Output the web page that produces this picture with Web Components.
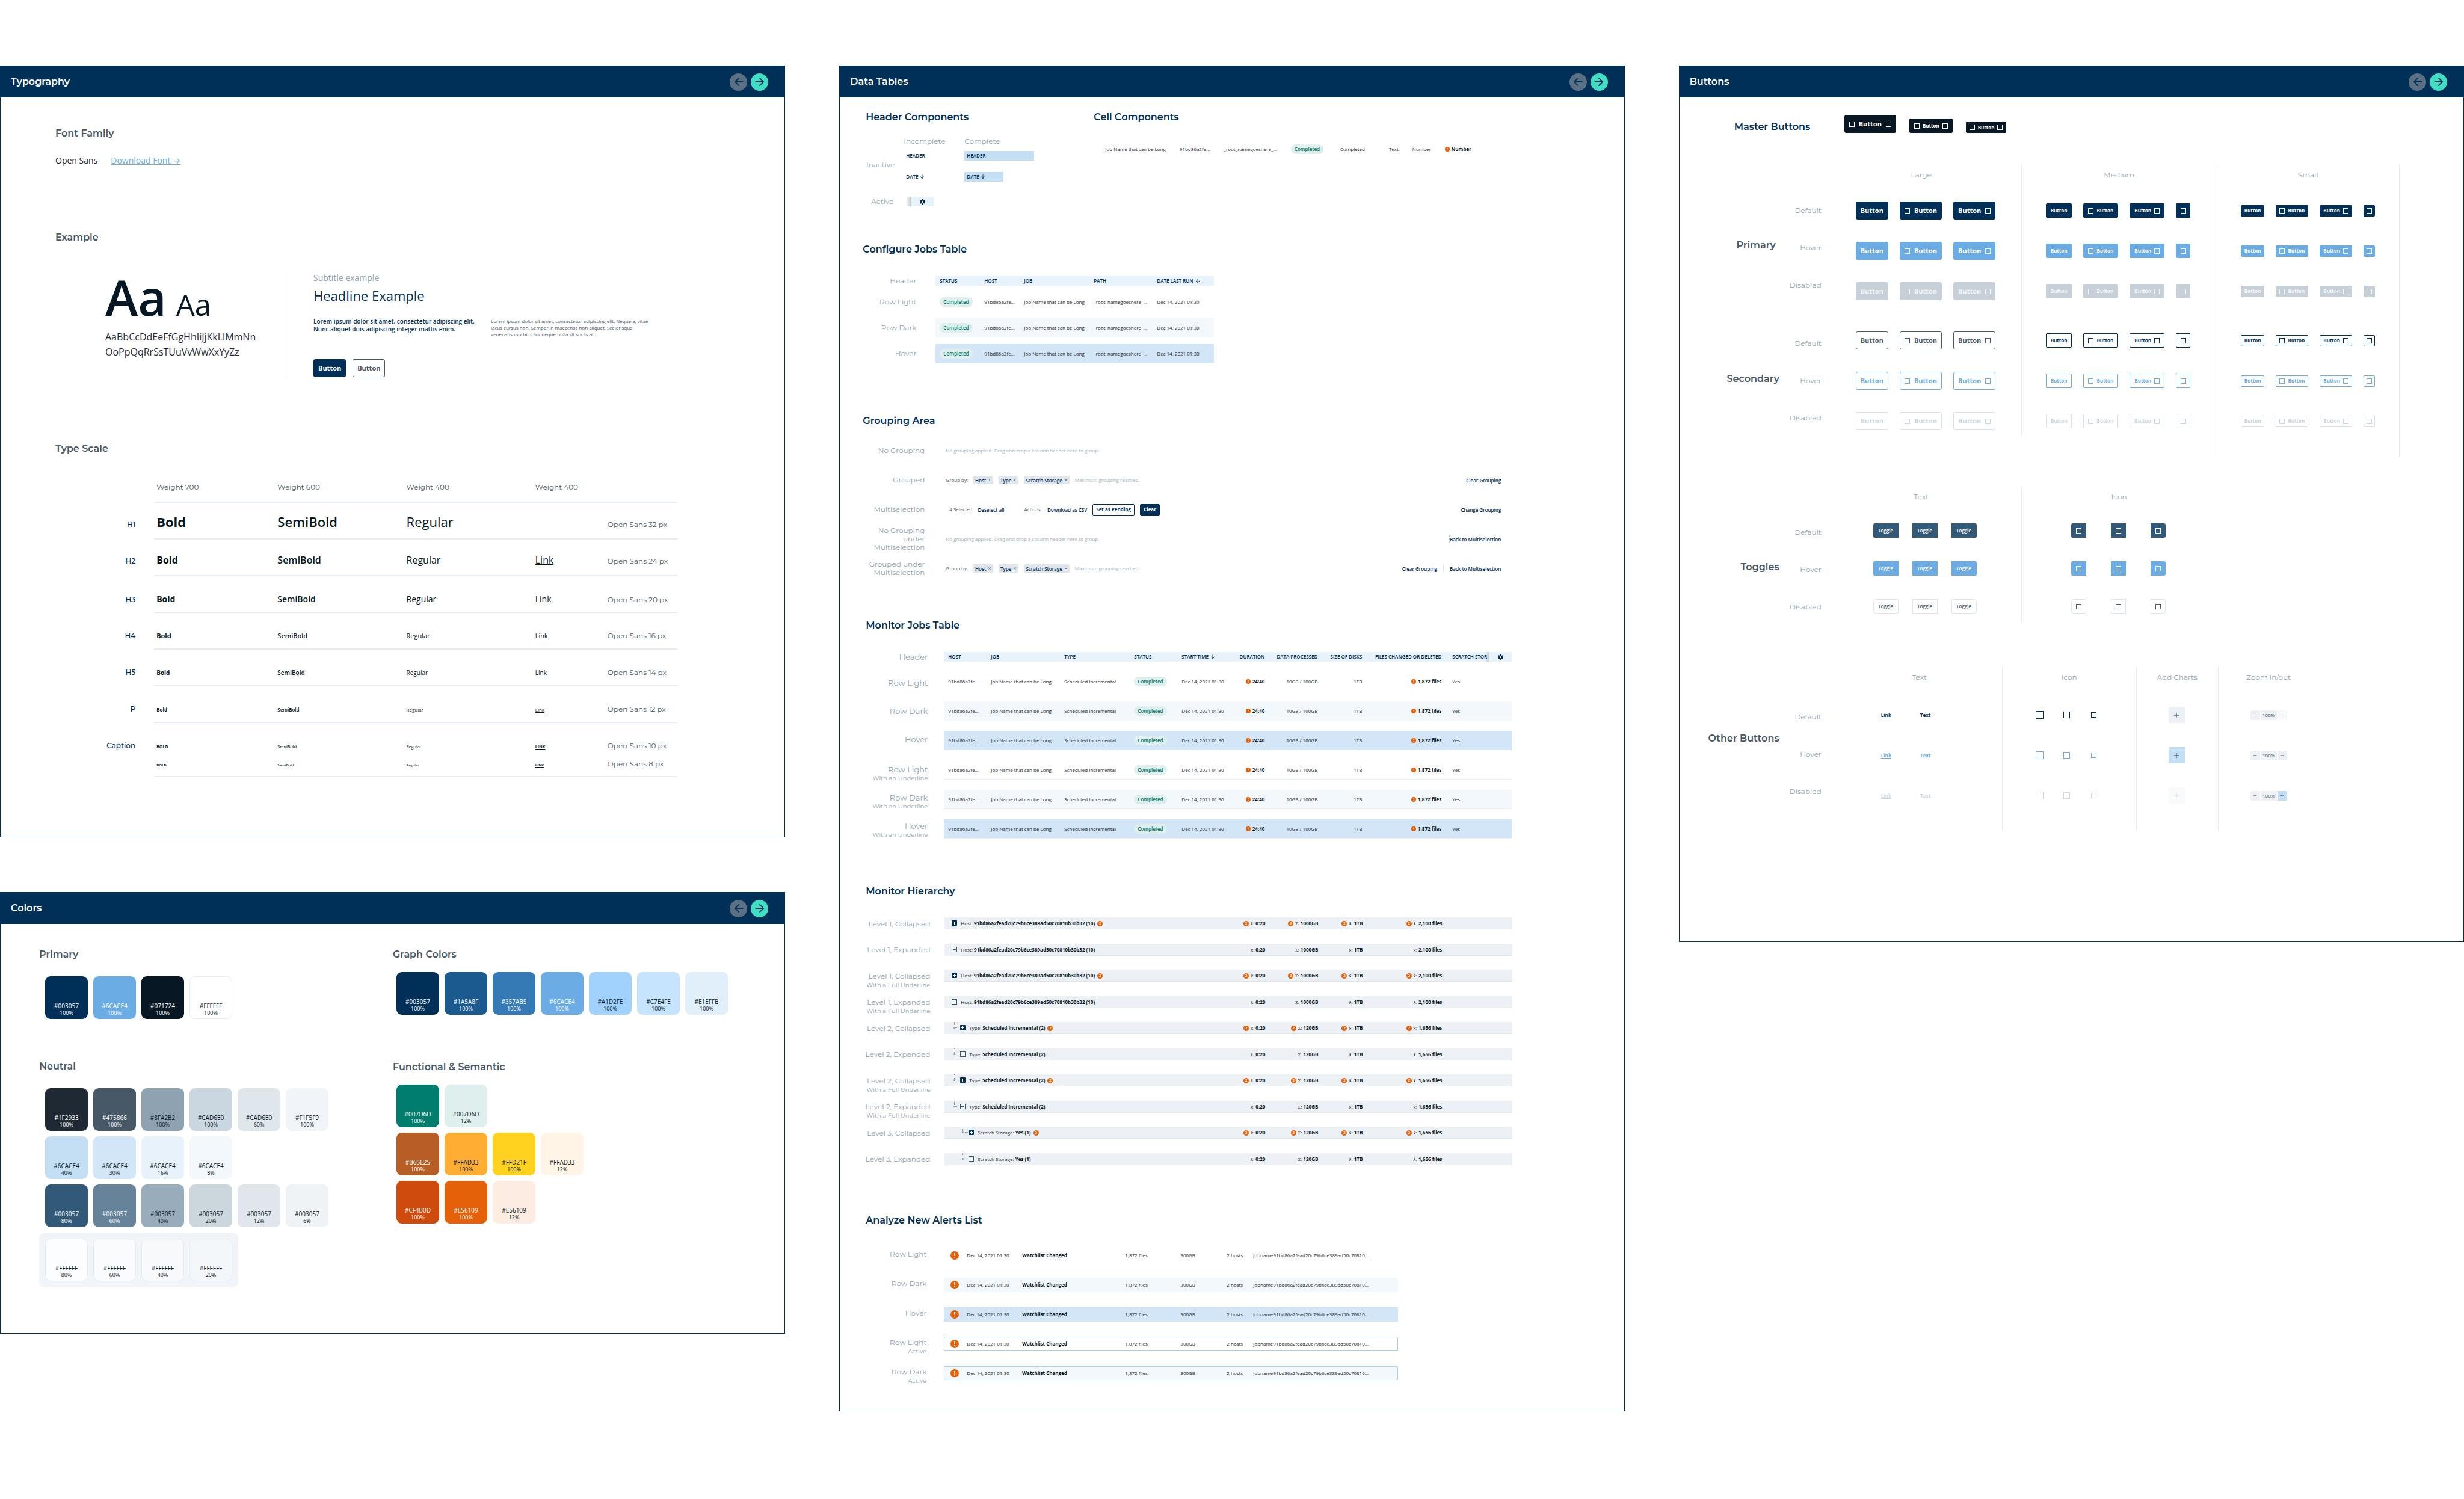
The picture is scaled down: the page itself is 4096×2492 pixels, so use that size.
<!DOCTYPE html>
<html lang="en">
<head>
<meta charset="utf-8">
<title>Design System</title>
<style>
  body {
    margin: 0;
    background: #fff;
    color: #1f2933;
    font: 8px/16px "Open Sans", "Noto Sans", sans-serif;
    --display: Montserrat, Inter, sans-serif;
    --navy: #003057;
    --blue: #6cace4;
    --ink: #071724;
    --slate: #475866;
    --mist: #8fa2b2;
    --silver: #cad6e0;
    --orange: #e56109;
  }
</style>
</head>
<body>
<ds-board></ds-board>
<script>
const define = (name, render, css) => customElements.define(name, class extends HTMLElement {
  connectedCallback() {
    if (this.shadowRoot) return;
    const root = this.attachShadow({ mode: 'open' });
    root.innerHTML = `<style>*{box-sizing:border-box}${css}</style>${render(this)}`;
  }
});

/* ---------- icons ---------- */
const ICONS = {
  back: '<path d="M20 11H7.83l5.59-5.59L12 4l-8 8 8 8 1.41-1.41L7.83 13H20z"/>',
  next: '<path d="M12 4l-1.41 1.41L16.17 11H4v2h12.17l-5.58 5.59L12 20l8-8z"/>',
  down: '<path d="M20 12l-1.41-1.41L13 16.17V3h-2v13.17l-5.58-5.59L4 12l8 8z"/>',
  gear: '<path d="M19.14 12.94c.04-.3.06-.61.06-.94 0-.32-.02-.64-.07-.94l2.03-1.58a.49.49 0 0 0 .12-.61l-1.92-3.32a.49.49 0 0 0-.59-.22l-2.39.96c-.5-.38-1.03-.7-1.62-.94l-.36-2.54A.48.48 0 0 0 13.92 2h-3.84c-.24 0-.43.17-.47.41l-.36 2.54c-.59.24-1.13.57-1.62.94l-2.39-.96a.48.48 0 0 0-.59.22L2.74 8.87c-.12.21-.08.47.12.61l2.03 1.58c-.05.3-.09.63-.09.94s.02.64.07.94l-2.03 1.58a.49.49 0 0 0-.12.61l1.92 3.32c.12.22.37.29.59.22l2.39-.96c.5.38 1.03.7 1.62.94l.36 2.54c.05.24.24.41.48.41h3.84c.24 0 .44-.17.47-.41l.36-2.54c.59-.24 1.13-.56 1.62-.94l2.39.96c.22.08.47 0 .59-.22l1.92-3.32a.48.48 0 0 0-.12-.61zM12 15.6a3.6 3.6 0 1 1 0-7.2 3.6 3.6 0 0 1 0 7.2z"/>',
  close: '<path d="M5 5l14 14M19 5L5 19" stroke="currentColor" stroke-width="2.5"/>',
  plus: '<path d="M11 2h2v9h9v2h-9v9h-2v-9H2v-2h9z"/>',
  minus: '<path d="M2 11h20v2H2z"/>',
  square: '',
  alert: '<circle cx="12" cy="12" r="12" fill="#e56109"/><path d="M10.6 5h2.8v8h-2.8zM10.6 15.4h2.8v2.8h-2.8z" fill="#fff"/>'
};
define('ds-icon', el => `<svg viewBox="0 0 24 24" aria-hidden="true">${ICONS[el.getAttribute('name')]}</svg>`,
  `:host{box-sizing:border-box;display:inline-block;width:8px;height:8px;flex:none}svg{display:block;width:100%;height:100%;fill:currentColor}
  :host([name=square]){border:1px solid currentColor}`);
const icon = name => `<ds-icon name="${name}"></ds-icon>`;

/* ---------- frame ---------- */
define('ds-panel', el => `
  <header><h1>${el.getAttribute('heading')}</h1>
    <nav><button class="prev" aria-label="Previous">${icon('back')}</button><button class="next" aria-label="Next">${icon('next')}</button></nav>
  </header><slot></slot>`, `
  :host{display:block;box-sizing:border-box;border:1px solid var(--navy);background:#fff}
  header{display:flex;align-items:center;justify-content:space-between;height:52px;padding:0 27px 0 17px;background:var(--navy)}
  h1{margin:0;font:600 16px/22px var(--display);color:#fff}
  nav{display:flex;gap:6px}
  button{width:29px;height:29px;padding:0;border:0;border-radius:50%;display:grid;place-items:center;color:var(--navy)}
  .prev{background:#5b7083}.next{background:#40dfc4}
  ds-icon{width:22px;height:22px}`);

define('ds-board', () => `
  <div class="col">
    <ds-panel heading="Typography"><type-sheet></type-sheet></ds-panel>
    <ds-panel heading="Colors"><color-sheet></color-sheet></ds-panel>
  </div>
  <div class="col"><ds-panel heading="Data Tables"><data-sheet></data-sheet></ds-panel></div>
  <div class="col"><ds-panel heading="Buttons"><button-sheet></button-sheet></ds-panel></div>`, `
  :host{display:grid;grid-template-columns:repeat(3,minmax(0,1fr));gap:90px;padding:109px 0 145px;align-items:start}
  .col{display:flex;flex-direction:column;gap:91px}`);

/* ---------- buttons ---------- */
define('ds-button', el => {
  const a = n => el.hasAttribute(n);
  return `<button ${a('off') ? 'disabled' : ''} ${a('bare') ? 'aria-label="Icon button"' : ''}>${a('before') ? icon('square') : ''}${a('bare') ? icon('square') : '<span><slot></slot></span>'}${a('after') ? icon('square') : ''}</button>`;
}, `
  :host{display:inline-flex}
  button{display:flex;align-items:center;justify-content:center;height:24px;padding:0 7px;gap:5px;border:1px solid var(--navy);border-radius:2px;background:var(--navy);color:#fff;font:700 8px/10px "Open Sans",sans-serif;white-space:nowrap}
  ds-icon{width:9px;height:9px}
  :host([size=large]) button{height:30px;font-size:11px;line-height:14px;gap:7px;border-radius:3px}
  :host([size=small]) button{height:19px;padding:0 5px}
  :host([bare]) button{width:24px;padding:0}
  :host([bare][size=small]) button{width:19px}
  :host([tone=master]) button{background:var(--ink);border-color:var(--ink)}
  :host([tone=hover]) button{background:var(--blue);border-color:var(--blue)}
  :host([tone=off]) button{background:#c7d0d8;border-color:#c7d0d8;color:#f4f7f9}
  :host([tone=line]) button{background:#fff;color:var(--navy);border-color:var(--navy)}
  :host([tone=line][size=large]) button{color:var(--slate);border-color:var(--slate)}
  :host([tone=line-hover]) button{background:#fff;color:var(--blue);border-color:var(--blue)}
  :host([tone=line-off]) button{background:#fff;color:var(--silver);border-color:#d8e0e8}`);

/* ---------- typography ---------- */
const SCALE = [
  ['H1', 22, 32], ['H2', 16, 24], ['H3', 14, 20], ['H4', 11, 16], ['H5', 10, 14], ['P', 8, 12], ['Caption', 7, 10], ['', 6, 8]
];
define('type-scale', () => `<table>
  <colgroup><col class="c0"><col class="c1"><col class="c2"><col class="c2"><col class="c4"><col class="c4"></colgroup>
  <thead><tr><td></td><th>Weight 700</th><th>Weight 600</th><th>Weight 400</th><th>Weight 400</th><th></th></tr></thead>
  <tbody>${SCALE.map(([name, size, label], i) => `<tr class="r${i}" style="--size:${size}px"><th class="tag">${name}</th>
    <td class="b7">${i > 5 ? 'BOLD' : 'Bold'}</td><td class="b6">SemiBold</td><td>Regular</td>
    <td>${i === 0 ? '' : `<a href="#" class="${i > 5 ? 'b7' : ''}">${i > 5 ? 'LINK' : 'Link'}</a>`}</td><td class="px">Open Sans ${label} px</td></tr>`).join('')}</tbody></table>`, `
  :host{display:block}
  table{border-collapse:separate;border-spacing:0;table-layout:fixed;width:1034px}
  .c0{width:164px}.c1{width:201px}.c2{width:214px}.c4{width:120px}
  td,th{padding:26px 0 0 4px;text-align:left;vertical-align:baseline;font-weight:400;line-height:24px;white-space:nowrap;border-bottom:2px solid #e6ecf3}
  tbody td{font-size:var(--size);color:var(--ink)}
  thead td,.tag{border-bottom:0}
  thead th{font:400 12px/24px var(--display);color:var(--slate);padding-top:11px}
  thead tr{height:49px}
  tbody tr{height:61px}
  .tag{font:500 12px/24px var(--display);color:var(--navy);text-align:right;padding-right:31px}
  tbody td.px{font:400 12px/24px var(--display);color:var(--slate)}
  .r0>*{padding-top:19px}.r1>*{padding-top:22px}
  .r6{height:56px}.r6>*{border-bottom:0}
  .r7{height:34px}.r7>*{padding-top:0}
  .b7{font-weight:700}.b6{font-weight:600}
  a{color:inherit}`);

define('type-sheet', () => `
  <h2>Font Family</h2>
  <p class="family"><span>Open Sans</span><a href="#">Download Font →</a></p>
  <h2 class="second">Example</h2>
  <div class="example">
    <div class="glyphs"><div class="aa"><strong>Aa</strong><span>Aa</span></div><p>AaBbCcDdEeFfGgHhIiJjKkLlMmNn<br>OoPpQqRrSsTUuVvWwXxYyZz</p></div>
    <div class="story">
      <div class="sub">Subtitle example</div>
      <div class="head">Headline Example</div>
      <div class="texts"><p class="lead">Lorem ipsum dolor sit amet, consectetur adipiscing elit.<br>Nunc aliquet duis adipiscing integer mattis enim.</p>
      <p class="body">Lorem ipsum dolor sit amet, consectetur adipiscing elit. Neque a, vitae<br>lacus cursus non. Semper in maecenas non aliquet. Scelerisque<br>venenatis morbi dolor neque nulla sit sociis at</p></div>
      <div class="acts"><ds-button size="large">Button</ds-button><ds-button size="large" tone="line">Button</ds-button></div>
    </div>
  </div>
  <h2 class="third">Type Scale</h2>
  <type-scale></type-scale>`, `
  :host{display:block;padding:49px 0 99px 91px}
  p{margin:0}
  h2{margin:0;font:600 16px/22px var(--display);color:var(--slate)}
  .family{display:flex;gap:22px;margin-top:24px;font:14px/20px "Open Sans",Inter,sans-serif;color:#1f2933}
  .family a{color:var(--blue)}
  .second{margin-top:107px}.third{margin:108px 0 30px}
  .example{display:flex;margin-top:46px;color:var(--ink)}
  .glyphs{width:387px;margin-top:8px;padding-left:83px;border-right:1px solid #e6ecf3}
  .aa{display:flex;align-items:baseline;gap:16px;height:66px}
  .aa strong{font-size:82px;line-height:66px;font-weight:600}
  .aa span{font-size:49px;line-height:46px}
  .glyphs p{margin-top:22px;font-size:16px;line-height:25px;color:#1f2933}
  .story{padding-left:42px}
  .sub{font-size:14px;line-height:20px;color:var(--mist)}
  .head{margin-top:4px;font-size:22px;line-height:30px;color:var(--navy)}
  .texts{display:flex;margin-top:22px}
  .lead{width:295px;font-size:10px;line-height:13px;font-weight:600;color:var(--navy);white-space:nowrap}
  .body{font-size:8px;line-height:11px;color:var(--slate);white-space:nowrap}
  .acts{display:flex;gap:11px;margin-top:36px}`);

/* ---------- colors ---------- */
define('color-swatch', el => `<span>${el.getAttribute('hex')}</span><small>${el.getAttribute('pct')}</small>`, `
  :host{box-sizing:border-box;display:flex;flex-direction:column;justify-content:flex-end;align-items:center;width:71px;height:71px;padding-bottom:5px;border-radius:9px;color:var(--ink)}
  :host([light]){color:#fff}
  :host([edge]){border:1px solid #e6ecf3;padding-bottom:4px}
  span{font-size:10px;line-height:12px}small{font-size:9px;line-height:11px}`);
const swatches = (list, cls = '') => `<div class="row ${cls}">${list.map(([hex, pct, bg, flag = '']) => `<color-swatch hex="#${hex}" pct="${pct}%" style="background:${bg}" ${flag}></color-swatch>`).join('')}</div>`;
define('color-sheet', () => `
  <section>
    <h2>Primary</h2>
    ${swatches([['003057', 100, '#003057', 'light'], ['6CACE4', 100, '#6cace4', 'light'], ['071724', 100, '#071724', 'light'], ['FFFFFF', 100, '#fff', 'edge']])}
    <h2 class="two">Neutral</h2>
    ${swatches([['1F2933', 100, '#1f2933', 'light'], ['475866', 100, '#475866', 'light'], ['8FA2B2', 100, '#8fa2b2'], ['CAD6E0', 100, '#cad6e0'], ['CAD6E0', 60, '#dfe6ec'], ['F1F5F9', 100, '#f1f5f9']])}
    ${swatches([['6CACE4', 40, '#c4def4'], ['6CACE4', 30, '#d3e6f7'], ['6CACE4', 16, '#e7f2fb'], ['6CACE4', 8, '#f3f8fd']])}
    ${swatches([['003057', 80, '#335979', 'light'], ['003057', 60, '#66839a', 'light'], ['003057', 40, '#99acbc'], ['003057', 20, '#ccd6dd'], ['003057', 12, '#e0e6eb'], ['003057', 6, '#f0f3f5']])}
    ${swatches([['FFFFFF', 80, '#fcfdfe', 'edge'], ['FFFFFF', 60, '#f9fbfd', 'edge'], ['FFFFFF', 40, '#f7f9fb', 'edge'], ['FFFFFF', 20, '#f4f7fa', 'edge']], 'tray')}
  </section>
  <section class="right">
    <h2>Graph Colors</h2>
    ${swatches([['003057', 100, '#003057', 'light'], ['1A5A8F', 100, '#1a5a8f', 'light'], ['357AB5', 100, '#357ab5', 'light'], ['6CACE4', 100, '#6cace4', 'light'], ['A1D2FE', 100, '#a1d2fe'], ['C7E4FE', 100, '#c7e4fe'], ['E1EFFB', 100, '#e1effb']], 'graph')}
    <h2 class="two">Functional &amp; Semantic</h2>
    ${swatches([['007D6D', 100, '#007d6d', 'light'], ['007D6D', 12, '#dfefed']])}
    ${swatches([['B65E25', 100, '#b65e25', 'light'], ['FFAD33', 100, '#ffad33'], ['FFD21F', 100, '#ffd21f'], ['FFAD33', 12, '#fff4e6']])}
    ${swatches([['CF4B0D', 100, '#cf4b0d', 'light'], ['E56109', 100, '#e56109', 'light'], ['E56109', 12, '#fcece1']])}
  </section>`, `
  :host{display:grid;grid-template-columns:588px minmax(0,1fr);padding:40px 0 76px 64px;align-items:start}
  section{display:flex;flex-direction:column;align-items:flex-start;gap:9px}
  h2{margin:0 0 16px;font:600 16px/22px var(--display);color:var(--slate)}
  .two{margin-top:59px}
  .row{display:flex;gap:9px;padding-left:10px}
  .tray{padding:10px;background:#f1f5f9;border-radius:9px}
  .right h2{margin-bottom:9px}.right .two{margin-top:67px}
  .right .row{padding-left:6px}`);

/* ---------- data tables ---------- */
const CELL = `
  table{border-collapse:separate;table-layout:fixed}
  td,th{box-sizing:border-box;padding:0 7px;text-align:left;font-weight:400;white-space:nowrap;line-height:16px;vertical-align:middle}
  thead th{height:16px;background:#e7f2fb;color:var(--navy);font-weight:600}
  .num{text-align:right}
  b{font-weight:700;color:var(--ink)}
  .dark>td{background:#f3f8fd}.hover>td{background:#d3e6f7}
  .sort ds-icon{width:10px;height:10px;margin-left:2px;vertical-align:-2px}
  td>ds-icon{vertical-align:-1px;margin-right:3px}`;
define('status-badge', () => '<slot></slot>', `
  :host{display:inline-block;padding:0 6px;border-radius:8px;background:#dfefed;color:#007d6d;font-weight:600;line-height:16px;vertical-align:top}`);

define('side-labels', el => JSON.parse(el.getAttribute('items')).map(([text, sub, style]) =>
  `<div style="${style || ''}"><span>${text}</span>${sub ? `<small>${sub}</small>` : ''}</div>`).join(''), `
  :host{display:flex;flex-direction:column;gap:var(--gap,0px);text-align:right;font-family:var(--display);color:var(--mist)}
  div{display:flex;flex-direction:column;height:var(--h,32px);justify-content:var(--just,center);flex:none}
  div:nth-child(even){margin-top:var(--even,0px)}
  span{font-size:var(--fs,12px);line-height:var(--lh,20px)}small{font-size:10px;line-height:10px}`);
const rail = (items, style) => `<side-labels style="${style}" items='${JSON.stringify(items)}'></side-labels>`;

define('configure-table', () => {
  const row = c => `<tr class="${c}"><td><status-badge>Completed</status-badge></td><td>91bd86a2fe...</td><td>Job Name that can be Long</td><td>_root_namegoeshere_...</td><td>Dec 14, 2021 01:30</td></tr>`;
  return `<table><colgroup>${[74, 66, 116, 105, 102].map(w => `<col style="width:${w}px">`).join('')}</colgroup>
  <thead><tr><th>STATUS</th><th>HOST</th><th>JOB</th><th>PATH</th><th class="sort">DATE LAST RUN${icon('down')}</th></tr></thead>
  <tbody>${row('')}${row('dark')}${row('hover')}</tbody></table>`;
}, CELL + `:host{display:block}table{width:463px;border-spacing:0 11px;margin:-11px 0}td{height:32px}`);

define('monitor-table', () => {
  const row = c => `<tr class="${c}"><td>91bd86a2fe...</td><td>Job Name that can be Long</td><td>Scheduled Incremental</td><td><status-badge>Completed</status-badge></td><td>Dec 14, 2021 01:30</td><td class="num">${icon('alert')}<b>24:40</b></td><td class="num">10GB / 100GB</td><td class="num">1TB</td><td class="num">${icon('alert')}<b>1,872 files</b></td><td class="scratch">Yes</td><td></td></tr>`;
  return `<table><colgroup>${[71, 122, 116, 79, 87, 65, 88, 74, 132, 72, 38].map(w => `<col style="width:${w}px">`).join('')}</colgroup>
  <thead><tr><th>HOST</th><th>JOB</th><th>TYPE</th><th>STATUS</th><th class="sort">START TIME${icon('down')}</th><th class="num">DURATION</th><th class="num">DATA PROCESSED</th><th class="num">SIZE OF DISKS</th><th class="num">FILES CHANGED OR DELETED</th><th class="scratch edge">SCRATCH STOR</th><th class="gear">${icon('gear')}</th></tr></thead>
  <tbody>${row('')}${row('dark')}${row('hover')}${row('line')}${row('dark line')}${row('hover line')}</tbody></table>`;
}, CELL + `:host{display:block}table{width:944px;border-spacing:0 17px;margin:-17px 0}td{height:32px}
  .scratch{padding:0 0 0 11px}
  .edge{background-image:linear-gradient(90deg,transparent 66px,#c3ced8)}
  .gear{text-align:center;padding:0}.gear ds-icon{width:11px;height:11px;vertical-align:-3px}
  .line>td{border-bottom:1px solid #e7eef4}`);

const plusBox = x => `<rect x="${x}" y="5" width="9" height="9" rx="1" fill="#003057"/><path d="M${x + 4.5} 7v5M${x + 2} 9.5h5" stroke="#fff"/>`;
const minusBox = x => `<rect x="${x + .5}" y="5.5" width="8" height="8" fill="#fff" fill-opacity=".6" stroke="#335979"/><path d="M${x + 2} 9.5h5" stroke="#335979"/>`;
define('tree-table', () => {
  const rows = [];
  const levels = [['Host:', '91bd86a2fead20c79b6ce389ad50c70810b30b32 (10)', '1000GB', '2,100 files'], ['Type:', 'Scheduled Incremental (2)', '120GB', '1,656 files'], ['Scratch Storage:', 'Yes (1)', '120GB', '1,656 files']];
  [[0, 0], [0, 1], [1, 0], [1, 1], [2, 1]].forEach(([lv, full]) => [1, 0].forEach(shut => {
    const [k, v, sum, files] = levels[lv], x = 12 + 14 * lv, dx = x - 10;
    const n = shut ? '<i>2</i>' : '';
    rows.push(`<tr class="${full ? 'full' : 'part'}"><td><div class="cell"><svg width="${27 + 14 * lv}" height="20">${lv ? `<path d="M${dx + .5} 0v8M${dx + 2} 9.5h7" stroke="#8fa2b2" stroke-dasharray="1 1" fill="none"/><circle cx="${dx + .5}" cy="9.5" r="1.5" fill="#8fa2b2"/>` : ''}${shut ? plusBox(x) : minusBox(x)}</svg><div class="name">${k}&nbsp;<b>${v}</b>${n}</div></div></td>
      <td class="num">${n}x̄: <b>0:20</b></td><td class="num">${n}Σ: <b>${sum}</b></td><td class="num">${n}x̄: <b>1TB</b></td><td class="num">${n}x̄: <b>${files}</b></td><td></td></tr>`);
  }));
  return `<table><colgroup>${[475, 65, 88, 74, 132, 110].map(w => `<col style="width:${w}px">`).join('')}</colgroup><tbody>${rows.join('')}</tbody></table>`;
}, CELL + `:host{display:block}table{width:944px;border-spacing:0;margin-top:-23px}
  td{background:#edf1f5;background-clip:padding-box;border-top:23px solid transparent;line-height:20px}
  tr:nth-child(even) td{border-top-width:24px}
  td:first-child{padding:0}
  .cell{display:flex;height:20px}svg{flex:none;display:block}
  .name{flex:1;display:flex;align-items:center}
  td:not(:first-child),.name,.full .cell{box-shadow:inset 0 -1px #dde4ea}
  i{display:inline-block;width:9px;height:9px;border-radius:50%;background:var(--orange);color:#fff;font:700 6px/9px "Open Sans",sans-serif;text-align:center;margin-right:3px;vertical-align:middle}
  .name i{margin:0 0 0 4px}`);

define('alerts-table', () => `<table><colgroup>${[38, 92, 171, 92, 77, 44, 241].map(w => `<col style="width:${w}px">`).join('')}</colgroup><tbody>${['', 'dark', 'hover', 'active', 'dark active'].map(c => `<tr class="${c}"><td class="ico">${icon('alert')}</td><td>Dec 14, 2021 01:30</td><td><b>Watchlist Changed</b></td><td>1,872 files</td><td>300GB</td><td>2 hosts</td><td>jobname91bd86a2fead20c79b6ce389ad50c70810...</td></tr>`).join('')}</tbody></table>`,
  CELL + `:host{display:block}table{width:755px;border-spacing:0 25px;margin:-25px 0}
  td{height:24px;padding:0;line-height:14px}.ico{padding-left:11px}.ico ds-icon{width:14px;height:14px;display:block;margin:0}
  .active td{border:solid #a9cfee;border-width:1px 0}.active td:first-child{border-left-width:1px;padding-left:10px;border-radius:2px 0 0 2px}.active td:last-child{border-right-width:1px;border-radius:0 2px 2px 0}`);

define('grouping-bars', () => {
  const chips = `<span>Group by:</span>${['Host', 'Type', 'Scratch Storage'].map(t => `<button class="chip">${t}${icon('close')}</button>`).join('')}<span class="hint">Maximum grouping reached.</span>`;
  const none = '<span class="hint">No grouping applied. Drag and drop a column header here to group.</span>';
  return `<div>${none}</div>
  <div>${chips}<button class="end">Clear Grouping</button></div>
  <div class="multi"><span>4 Selected</span><button>Deselect all</button><span class="actions">Actions:</span><button>Download as CSV</button><ds-button size="small" tone="line">Set as Pending</ds-button><ds-button size="small">Clear</ds-button><button class="end">Change Grouping</button></div>
  <div>${none}<button class="end tick">Back to Multiselection</button></div>
  <div>${chips}<button class="end">Clear Grouping</button><hr><button>Back to Multiselection</button></div>`;
}, `
  :host{display:flex;flex-direction:column;gap:25px;width:923px;white-space:nowrap;color:var(--slate)}
  div{display:flex;align-items:center;gap:9px;height:24px}
  .multi{padding-left:6px}.actions{margin-left:24px}
  .hint{color:#a3b3c1}
  button{padding:0;border:0;background:none;font:600 8px/13px "Open Sans",sans-serif;color:var(--navy)}
  .chip{display:flex;align-items:center;gap:3px;height:14px;padding:0 3px;background:#e0e6eb;border-radius:2px}
  .chip ds-icon{width:6px;height:6px;color:var(--slate)}
  .end{margin-left:auto}
  .tick{border-left:1px dashed #b7c3cd}
  hr{width:1px;height:12px;margin:0 1px;border:0;background:#e0e6eb}`);

define('data-sheet', () => {
  const u = 'With an Underline', f = 'With a Full Underline';
  return `
  <div class="top">
    <section><h3>Header Components</h3>
      <div class="heads">
        <span></span><span class="lab">Incomplete</span><span class="lab">Complete</span>
        <span class="lab side">Inactive</span><span class="hd">HEADER</span><span class="hd fill wide">HEADER</span>
        <span class="hd">DATE${icon('down')}</span><span class="hd fill">DATE${icon('down')}</span>
        <span class="lab right">Active</span><button class="gear" aria-label="Settings">${icon('gear')}</button>
      </div>
    </section>
    <section><h3>Cell Components</h3>
      <div class="cells"><span>Job Name that can be Long</span><span>91bd86a2fe...</span><span>_root_namegoeshere_...</span><status-badge>Completed</status-badge><span class="plain">Completed</span><span>Text</span><span>Number</span><span class="warn">${icon('alert')}<b>Number</b></span></div>
    </section>
  </div>
  <section class="cfg"><h3>Configure Jobs Table</h3><div class="pair">
    ${rail([['Header', '', 'height:16px'], ['Row Light'], ['Row Dark'], ['Hover']], 'width:89px;--gap:11px')}<configure-table></configure-table></div></section>
  <section class="grp"><h3>Grouping Area</h3><div class="pair">
    ${rail([['No Grouping'], ['Grouped'], ['Multiselection'], ['No Grouping<br>under<br>Multiselection'], ['Grouped under Multiselection']], 'width:103px;--gap:25px;--h:24px;--lh:14px')}<grouping-bars></grouping-bars></div></section>
  <section class="mon"><h3>Monitor Jobs Table</h3><div class="pair">
    ${rail([['Header', '', 'height:16px;margin-bottom:11px'], ['Row Light'], ['Row Dark'], ['Hover'], ['Row Light', u, 'margin-top:8px'], ['Row Dark', u], ['Hover', u]], 'width:103px;--h:47px;--fs:13px')}<monitor-table></monitor-table></div></section>
  <section class="tree"><h3>Monitor Hierarchy</h3><div class="pair">
    ${rail([['Level 1, Collapsed'], ['Level 1, Expanded'], ['Level 1, Collapsed', f], ['Level 1, Expanded', f], ['Level 2, Collapsed'], ['Level 2, Expanded'], ['Level 2, Collapsed', f], ['Level 2, Expanded', f], ['Level 3, Collapsed'], ['Level 3, Expanded']], 'width:112px;--gap:23px;--h:20px;--even:1px;--just:flex-start')}<tree-table></tree-table></div></section>
  <section class="alerts"><h3>Analyze New Alerts List</h3><div class="pair">
    ${rail([['Row Light'], ['Row Dark'], ['Hover'], ['Row Light', 'Active'], ['Row Dark', 'Active']], 'width:101px;--gap:25px;--h:24px;--just:flex-start')}<alerts-table></alerts-table></div></section>`;
}, `
  :host{display:block;padding:23px 0 50px 38px}
  h3{margin:0;font:600 16px/20px var(--display);color:var(--navy);white-space:nowrap}
  .top{display:grid;grid-template-columns:379px minmax(0,1fr);padding-left:5px}
  .heads{display:grid;grid-template-columns:63px 101px 116px;grid-template-rows:24px 35px 41px 16px;margin-top:22px}
  .lab{font:400 12px/16px var(--display);color:var(--mist);white-space:nowrap}
  .side{grid-row:2/4;grid-column:1;align-self:center;text-align:right;padding:0 15px 31px 0}
  .right{text-align:right;padding-right:17px}
  .hd{height:16px;padding:0 4px;font-weight:600;line-height:16px;color:var(--navy);justify-self:start;display:flex;align-items:center;gap:2px}
  .hd ds-icon{width:10px;height:10px}
  .fill{background:#c4def4;width:65px}.wide{width:116px}
  .gear{width:50px;height:16px;padding:0 0 0 12px;border:0;background:linear-gradient(90deg,#fff 4px,#c3cbd3 12px,#e7f2fb 12px);color:var(--navy);display:grid;place-items:center}
  .gear ds-icon{width:11px;height:11px}
  .cells{display:flex;gap:23px;margin-top:35px;padding-left:19px;white-space:nowrap}
  .plain{padding:0 17px 0 5px}.warn{display:flex;align-items:center;gap:3px;color:var(--ink)}
  .pair{display:flex;align-items:flex-start}
  .cfg{margin-top:62px}.cfg .pair{margin-top:34px;gap:32px}
  .grp{margin-top:86px}.grp .pair{margin-top:27px;gap:35px}
  .mon{margin-top:73px;padding-left:5px}.mon .pair{margin-top:34px;gap:27px}
  .tree{margin-top:71px}.tree .pair{margin-top:33px;gap:24px}.tree h3{padding-left:5px}
  .alerts{margin-top:82px;padding-left:5px}.alerts .pair{margin-top:36px;gap:29px}`);

/* ---------- buttons sheet ---------- */
define('button-column', el => {
  const size = el.getAttribute('size');
  const row = (tone, off) => {
    const b = extra => `<ds-button size="${size}" ${tone ? `tone="${tone}"` : ''} ${off ? 'off' : ''} ${extra}>Button</ds-button>`;
    return `<div class="row">${b('')}${b('before')}${b('after')}${size === 'large' ? '' : b('bare')}</div>`;
  };
  return `<h4>${el.getAttribute('heading')}</h4><div class="set">${row('')}${row('hover')}${row('off', 1)}</div><div class="set">${row('line')}${row('line-hover')}${row('line-off', 1)}</div>`;
}, `
  :host{box-sizing:border-box;display:block;padding-top:7px}
  h4{margin:0 0 34px;font:400 12px/20px var(--display);color:var(--mist);text-align:center}
  .set{display:flex;flex-direction:column;gap:37px;padding-left:var(--inset)}
  .set+.set{margin-top:52px}
  .row{display:flex;align-items:center;height:30px;gap:19px}`);

define('button-sheet', () => {
  const states = off => rail([['Default'], ['Hover'], ['Disabled']], `width:70px;--h:20px;--gap:42px;padding-top:${off}px`);
  const zoom = c => `<div class="zoom ${c}"><button aria-label="Zoom out">${icon('minus')}</button><output>100%</output><button class="in" aria-label="Zoom in">${icon('plus')}</button></div>`;
  const tog = ['', 'hov', 'dis'];
  return `
  <div class="master"><h3>Master Buttons</h3><ds-button size="large" tone="master" before after>Button</ds-button><ds-button tone="master" before after>Button</ds-button><ds-button size="small" tone="master" before after>Button</ds-button></div>
  <div class="block a">
    <div class="names"><h3 class="in6">Primary</h3><h3 class="sec">Secondary</h3></div>
    <div class="twin">${states(66)}${states(0)}</div>
    <button-column size="large" heading="Large" style="width:332px;--inset:57px"></button-column>
    <button-column class="med" heading="Medium" style="width:325px;--inset:40px"></button-column>
    <button-column class="sml" size="small" heading="Small" style="width:304px;--inset:39px"></button-column>
  </div>
  <div class="block b">
    <div class="names"><h3>Toggles</h3></div>${states(66)}
    <div class="col" style="width:332px"><h4>Text</h4><div class="stack">${tog.map(c => `<div class="tg ${c}">${'<button>Toggle</button>'.repeat(3)}</div>`).join('')}</div></div>
    <div class="col ruled" style="width:325px"><h4>Icon</h4><div class="stack ico">${tog.map(c => `<div class="tg ${c}">${`<button aria-label="Toggle">${icon('square')}</button>`.repeat(3)}</div>`).join('')}</div></div>
  </div>
  <div class="block c">
    <div class="names"><h3>Other Buttons</h3></div>${states(73)}
    <div class="col" style="width:300px"><h4 class="off">Text</h4>${tog.map(c => `<div class="ln links ${c}"><a href="#">Link</a><button>Text</button></div>`).join('')}</div>
    <div class="col ruled" style="width:223px"><h4>Icon</h4>${tog.map(c => `<div class="ln icons ${c}">${[13, 11, 9].map(s => `<button aria-label="Icon"><ds-icon name="square" style="width:${s}px;height:${s}px"></ds-icon></button>`).join('')}</div>`).join('')}</div>
    <div class="col ruled" style="width:136px"><h4>Add Charts</h4>${tog.map(c => `<div class="ln add ${c}"><button aria-label="Add chart">${icon('plus')}</button></div>`).join('')}</div>
    <div class="col ruled" style="width:168px"><h4>Zoom in/out</h4>${['max', '', 'over'].map(c => `<div class="ln">${zoom(c)}</div>`).join('')}</div>
  </div>`;
}, `
  :host{display:block;padding:29px 0 184px 0}
  h3{margin:0;font:600 16px/20px var(--display);color:var(--slate)}
  h4{margin:0 0 34px;font:400 12px/20px var(--display);color:var(--mist);text-align:center}
  .master{display:flex;align-items:flex-end;gap:22px;padding-left:91px}
  .master h3{width:161px;color:var(--navy);white-space:nowrap}
  .block{display:flex;align-items:flex-start}
  .a{margin-top:53px}.b{margin-top:49px}.c{margin-top:74px}
  .names{width:166px;padding-top:124px;text-align:right}
  .c .names{padding-top:109px}
  .in6{padding-right:6px}.sec{margin-top:202px}
  .twin{display:flex;flex-direction:column;gap:77px}
  .med{border-left:1px solid #e6ecf3;height:450px}
  .sml{border:solid #e6ecf3;border-width:0 1px;height:486px}
  .col{padding-top:7px}.b .col{height:226px}.c .col{height:272px}
  .ruled{border-left:1px solid #e6ecf3}
  button{padding:0;border:0;background:none;font:600 8px/12px "Open Sans",sans-serif;color:inherit}
  .stack{display:flex;flex-direction:column;gap:39px;padding-left:86px}
  .tg{display:flex;gap:23px;color:#fff}
  .tg button{width:42px;height:24px;background:#335979;display:grid;place-items:center}
  .ico{padding-left:82px}.ico .tg{gap:41px}.ico button{width:25px}.tg ds-icon{width:9px;height:9px}
  .tg button:first-child{border-radius:3px 0 0 3px}.tg button:last-child{border-radius:0 3px 3px 0}
  .tg.hov button{background:var(--blue)}
  .tg.dis{color:var(--slate)}.tg.dis button{background:#fff;border:1px solid #e0e6eb}
  .off{padding-left:26px}
  .c h4{margin-bottom:39px}
  .ln{display:flex;align-items:center;height:27px;margin-bottom:40px;color:var(--navy)}
  .ln.hov{color:var(--blue)}.ln.dis{color:var(--silver)}
  .links{gap:48px;padding-left:99px}.links a{color:inherit;font-weight:700;line-height:12px}.links button{font-weight:700}
  .icons{padding-left:39px}.icons button{width:45px;display:grid;place-items:center}
  .add{padding-left:53px}.add button{width:27px;height:27px;background:#edf1f5;display:grid;place-items:center}
  .add ds-icon{width:10px;height:10px}
  .add.hov{color:var(--navy)}.add.hov button{background:#c4def4}.add.dis button{background:#f9fafb}
  .zoom{display:flex;gap:1px;margin-left:53px;height:16px;color:var(--slate)}
  .zoom>*{background:#edf1f5;display:grid;place-items:center;line-height:16px}
  .zoom button{width:16px;border-radius:2px 0 0 2px}.zoom .in{border-radius:0 2px 2px 0}.zoom output{width:27px}
  .zoom ds-icon{width:7px;height:7px}
  .zoom.max .in{background:#f6f8fa;color:var(--silver)}.zoom.over .in{background:#c4def4;color:var(--navy)}`);
</script>
</body>
</html>
